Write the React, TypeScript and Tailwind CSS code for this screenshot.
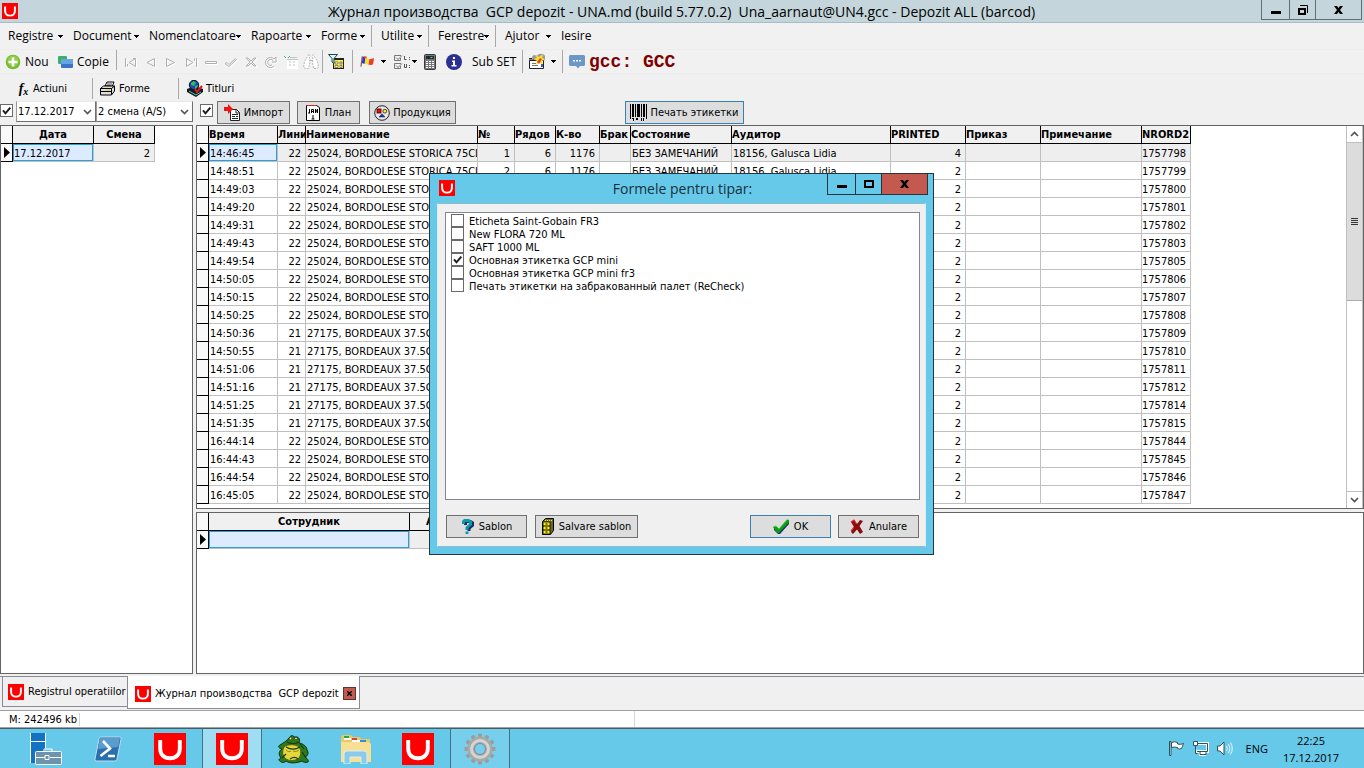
import React, { useState } from 'react';

type Kids = { children?: React.ReactNode };

const ULogo = ({ size }: { size: number }) => (
  <svg width={size} height={size} viewBox="0 0 32 32" className="shrink-0" aria-hidden="true">
    <rect width="32" height="32" fill="#fe0000" />
    <path d="M6.200 7v8.500c0 6.500 3.800 9.700 9.800 9.700s9.800-3.200 9.800-9.700V7" fill="none" stroke="#fff" strokeWidth="3.900" />
  </svg>
);

const Arrow = () => (
  <svg width="5" height="3" viewBox="0 0 5 3" className="shrink-0" shapeRendering="crispEdges" aria-hidden="true">
    <path d="M0 0h5v1H4v1H3v1H2V2H1V1H0z" fill="#000" />
  </svg>
);

const Sep = ({ className = '' }: { className?: string }) => (
  <span className={`w-px self-stretch bg-[#a7a7a7] ${className}`} />
);

const Chevron = ({ up = false }: { up?: boolean }) => (
  <svg width="9" height="6" viewBox="0 0 9 6" aria-hidden="true">
    <path d={up ? 'M1 5l3.5-3.5L8 5' : 'M1 1l3.5 3.5L8 1'} fill="none" stroke="#555" strokeWidth="1.7" />
  </svg>
);

function Check({ label, on, text = false }: { label: string; on: boolean; text?: boolean }) {
  const [v, setV] = useState(on);
  return (
    <label className="flex h-[13px] items-center gap-[5px] whitespace-nowrap">
      <span className="grid size-[13px] shrink-0">
        <input
          type="checkbox"
          aria-label={label}
          checked={v}
          onChange={() => setV(!v)}
          className="col-start-1 row-start-1 size-[13px] appearance-none border border-[#6a6a6a] bg-white"
        />
        {v && (
          <svg viewBox="0 0 13 13" className="pointer-events-none col-start-1 row-start-1 size-[13px]" aria-hidden="true">
            <path d="M3 6.3l2.500 3L10.300 3.600" fill="none" stroke="#1c1c1c" strokeWidth="2" />
          </svg>
        )}
      </span>
      {text && <span className="pt-px">{label}</span>}
    </label>
  );
}

/* ---------- menu ---------- */

const menus: { t: string; w: string; sep?: boolean; arrow?: boolean }[] = [
  { t: 'Registre', w: 'w-[55px]', arrow: true },
  { t: 'Document', w: 'w-[66px]', arrow: true },
  { t: 'Nomenclatoare', w: 'w-[92px]', arrow: true },
  { t: 'Rapoarte', w: 'w-[60px]', arrow: true },
  { t: 'Forme', w: 'w-[44px]', arrow: true, sep: true },
  { t: 'Utilite', w: 'w-[41px]', arrow: true, sep: true },
  { t: 'Ferestre', w: 'w-[51px]', arrow: true, sep: true },
  { t: 'Ajutor', w: 'w-[46px]', arrow: true },
  { t: 'Iesire', w: 'w-[30px]' },
];

const MenuBar = () => (
  <nav className="flex h-[27px] items-center border-b border-[#ececec] bg-[#f1f1f1] pl-2 font-['Open_Sans','Noto_Sans',sans-serif] text-xs">
    {menus.map((m) => (
      <React.Fragment key={m.t}>
        <button className={`flex items-center justify-between whitespace-nowrap ${m.w} ${m.sep ? 'mr-[6px]' : 'mr-[10px]'}`}>
          {m.t}
          {m.arrow && <Arrow />}
        </button>
        {m.sep && <Sep className="my-[2px] mr-[9px]" />}
      </React.Fragment>
    ))}
  </nav>
);

/* ---------- toolbar icons ---------- */

const navPaths: { n: string; d: string }[] = [
  { n: 'Prima', d: 'M2.500 4v9M4.500 12.500V10M12.500 4.500v8L6 8.500l6.500-4M12.500 4.500H10' },
  { n: 'Precedenta', d: 'M11.500 4.500v8L4 8.500l7.500-4z' },
  { n: 'Urmatoarea', d: 'M3.500 4.500v8l8-4-8-4z' },
  { n: 'Ultima', d: 'M3.500 4v8.500l6.500-4-6.500-4M13.500 4v9M11.500 4.500V7' },
  { n: 'Sterge', d: 'M2.500 7.500h11v2h-11z' },
  { n: 'Confirma', d: 'M2 9.500l2-1 2 2L12.500 4.500l1 1L6 12.500z' },
  { n: 'Renunta', d: 'M3 4h2l3 3 3-3h2L9 8l4 4h-2L8 9l-3 3H3l4-4z' },
  { n: 'Reincarca', d: 'M9 8h4V3l-2 2a5 5 0 1 0 0 7M10 6.500A3 3 0 1 0 9 11' },
];

const ToolButton = ({ label, children }: { label: string } & Kids) => (
  <button aria-label={label} className="flex h-5 w-5 shrink-0 items-center justify-center">
    {children}
  </button>
);

const NavIcon = ({ d }: { d: string }) => (
  <svg width="16" height="16" viewBox="0 0 16 16" fill="none" aria-hidden="true">
    <path d={d} stroke="#fff" transform="translate(1 1)" />
    <path d={d} stroke="#b0b0b0" />
  </svg>
);

const TableIcon = () => (
  <svg width="16" height="16" viewBox="0 0 16 16" aria-hidden="true">
    <path d="M1 2l2 2M5 4l2-2" stroke="#5aa" />
    <rect x="4" y="5" width="11" height="10" fill="#fff" />
    <path d="M7 3.500h7M4 5.500h11M6 8h2M10 8h2M6 11h2M10 11h2" stroke="#c4c4c4" />
  </svg>
);

const BinocularsIcon = () => (
  <svg width="18" height="17" viewBox="0 0 18 17" fill="#fff" stroke="#b8b8b8" aria-hidden="true">
    <path d="M6.500 1.500l1.500 1-1 4 1 3-1.500 6h-3l-2-1 1-6 3-5zM11.500 1.500l-1 1 .5 4-.5 3 1 6h3l2-1-1-6-3-5z" strokeDasharray="2 1" />
    <path d="M8 7.500h3" />
  </svg>
);

const FilterIcon = () => (
  <svg width="17" height="16" viewBox="0 0 17 16" aria-hidden="true">
    <rect x="5.500" y="4.500" width="10" height="10" fill="#ffe93b" stroke="#222" />
    <path d="M5 4h11v2H5z" fill="#222" />
    <path d="M7 8h3v2H7zM12 8h2v2h-2zM7 11.500h3v2H7zM12 11.500h2v2h-2z" fill="#fff" stroke="#444" strokeWidth=".6" />
    <path d="M.5.500h9l-3.500 4v5l-2-1.500V4.500z" fill="#dff1f1" stroke="#124b4b" />
  </svg>
);

const FlagsIcon = () => (
  <svg width="15" height="16" viewBox="0 0 16 16" aria-hidden="true">
    <path d="M2.500 2L1 13" stroke="#8a5a34" strokeWidth="1.3" />
    <path d="M3 2l3 1-1 7-3-1z" fill="#2136e8" />
    <path d="M6 3l4 2-1 6-4-1z" fill="#ffdf18" />
    <path d="M10 5c2 0 3-1 5-1l-1 6c-2 2-3 1-5 1z" fill="#ee3a2d" />
    <path d="M4 2h3v2H4z" fill="#ee3a2d" />
  </svg>
);

const ListIcon = () => (
  <svg width="17" height="16" viewBox="0 0 17 16" fill="none" aria-hidden="true">
    <path d="M7 1.500H.5v5h6V4M7 9.500H.5v5h6V12" stroke="#777" />
    <path d="M2 3.500l2 2 4-4M2 11.500l2 2 4-4" stroke="#777" />
    <path d="M10.500 2v3.500h2M15.500 3v1M15.500 5v1M10.500 10v3.500h2V10M15.500 11v1M15.500 13v1" stroke="#555" />
  </svg>
);

const CalcIcon = () => (
  <svg width="12" height="16" viewBox="0 0 12 16" aria-hidden="true">
    <rect x=".5" y=".5" width="11" height="15" rx="1" fill="#777" stroke="#3a3a3a" />
    <rect x="2" y="2" width="8" height="3" fill="#1d2c2c" />
    <path d="M6.500 3.500h2" stroke="#49e3dc" />
    <path d="M2 7.500h8M2 9.500h8M2 11.500h8M2 13.500h8" stroke="#fff" strokeDasharray="2 1" />
  </svg>
);

const InfoIcon = () => (
  <svg width="16" height="16" viewBox="0 0 16 16" aria-hidden="true">
    <circle cx="8" cy="8" r="8" fill="#2b3192" />
    <path d="M7 3h2v2H7zM6 6.500h3V11h1.500v1.500h-5V11H7V8H6z" fill="#fff" />
  </svg>
);

const WizardIcon = () => (
  <svg width="17" height="17" viewBox="0 0 17 17" className="shrink-0" aria-hidden="true">
    <path d="M3 5c0-3 3-4 5-2 1-3 7-3 8 0v4l-3 2H5z" fill="#9a9a9a" />
    <path d="M.5 7.500h14v8H.5z" fill="#fff" stroke="#222" />
    <path d="M0 5.500h3M0 7h5" stroke="#222" />
    <path d="M3 10.500h4M3 12.500h6" stroke="#777" />
    <path d="M6 2l4 2 4-3-1 4 3 1-3 2 1 3-4-1-3 2 1-4-3-2 3-1z" fill="#ffe525" />
    <path d="M8 9l3-4 2 1-3 5z" fill="#e8432e" />
    <path d="M12 11h2v3h-2z" fill="#3c58c8" />
  </svg>
);

const ChatIcon = () => (
  <svg width="16" height="16" viewBox="0 0 16 16" aria-hidden="true">
    <path d="M1 1h14l1 1v9l-1 1h-4l-2 2.500L7 12H1l-1-1V2z" fill="#6d97c8" />
    <path d="M4 6h2v1.500H4zM7 6h2v1.500H7zM10 6h2v1.500h-2z" fill="#fff" />
  </svg>
);

const Toolbar = () => (
  <div className="flex h-6 items-center border-b border-[#ececec] bg-[#f1f1f1] pl-[5px] font-['Open_Sans','Noto_Sans',sans-serif] text-xs">
    <button className="flex w-[53px] items-center gap-1">
      <svg width="16" height="16" viewBox="0 0 16 16" aria-hidden="true">
        <circle cx="8" cy="8" r="7.300" fill="#74bd2e" />
        <circle cx="8" cy="7" r="5.600" fill="#8fce45" />
        <path d="M6.700 3.500h2.600v3.200h3.200v2.600H9.300v3.200H6.700V9.300H3.500V6.700h3.200z" fill="#fff" />
      </svg>
      Nou
    </button>
    <button className="flex w-[58px] items-center gap-1">
      <svg width="15" height="14" viewBox="0 0 15 14" className="shrink-0" aria-hidden="true">
        <rect x="0" y="1" width="9" height="8" rx="1" fill="#3fae6b" />
        <rect x="3" y="4" width="12" height="9" rx="1" fill="#3c74c9" />
        <rect x="3" y="4" width="12" height="5" rx="1" fill="#67a4e6" />
      </svg>
      Copie
    </button>
    <Sep className="mr-1 h-5" />
    <div className="flex">
      {navPaths.map((p) => (
        <ToolButton key={p.n} label={p.n}>
          <NavIcon d={p.d} />
        </ToolButton>
      ))}
      <ToolButton label="Tabel">
        <TableIcon />
      </ToolButton>
      <ToolButton label="Cauta">
        <BinocularsIcon />
      </ToolButton>
    </div>
    <Sep className="ml-px mr-[3px]" />
    <div className="flex w-[26px]">
      <ToolButton label="Filtru">
        <FilterIcon />
      </ToolButton>
    </div>
    <Sep className="mr-[5px]" />
    <button aria-label="Limba" className="flex w-9 items-center gap-[6px] pl-[2px]">
      <FlagsIcon />
      <Arrow />
    </button>
    <button aria-label="Liste" className="flex w-[26px] items-center gap-px">
      <ListIcon />
      <Arrow />
    </button>
    <ToolButton label="Calculator">
      <CalcIcon />
    </ToolButton>
    <div className="ml-1 flex">
      <ToolButton label="Informatii">
        <InfoIcon />
      </ToolButton>
    </div>
    <button className="ml-2 w-[50px] whitespace-nowrap text-left">Sub SET</button>
    <Sep className="mr-[6px]" />
    <button aria-label="Expert" className="flex w-[33px] items-center gap-[5px]">
      <WizardIcon />
      <Arrow />
    </button>
    <Sep className="mr-[6px]" />
    <ChatIcon />
    <span className="ml-1 whitespace-pre font-['Liberation_Mono',monospace] text-lg font-bold text-[#800000]">gcc: GCC</span>
  </div>
);

const SubBar = () => (
  <div className="flex h-[26px] items-center bg-[#f0f0f0] pb-px pt-[4px]">
    <button className="flex w-[92px] items-center gap-[3px] pl-[17px]">
      <span className="w-[13px] font-['Liberation_Serif',serif] text-sm font-bold italic leading-4">
        f<sub className="text-[10px]">x</sub>
      </span>
      Actiuni
    </button>
    <Sep />
    <button className="flex w-[85px] items-center gap-[3px] pl-[7px]">
      <svg width="16" height="15" viewBox="0 0 16 15" aria-hidden="true">
        <path d="M5 5l2-4h7l-2 5z" fill="#fff" stroke="#000" />
        <path d="M7 3h5M6.500 4.500h5" stroke="#000" strokeWidth=".7" />
        <path d="M.5 7.500l3-2.500h11v5l-3 4h-11z" fill="#ddd" stroke="#000" />
        <path d="M.5 7.500h11l3-2.500M11.500 7.500v6M1 10.500h10" fill="none" stroke="#000" />
        <path d="M6 9h4" stroke="#e6d21a" strokeWidth="1.200" />
      </svg>
      Forme
    </button>
    <Sep />
    <button className="flex items-center gap-[3px] pl-2">
      <svg width="16" height="17" viewBox="0 0 16 17" aria-hidden="true">
        <path d="M0 9l8-3 8 3v3l-7 5-9-5z" fill="#1a1a1a" />
        <path d="M2 11l7 4 5-3" stroke="#3cc" fill="none" />
        <circle cx="7" cy="5" r="4.700" fill="#1746c9" stroke="#111" />
        <path d="M4 3l3-2 2 2-2 3-3-1zM8 6l3-1-1 3-2 1z" fill="#2fc04d" />
        <path d="M8 9l2 3 5-6" fill="none" stroke="#e01818" strokeWidth="2" />
      </svg>
      Titluri
    </button>
  </div>
);

const Drop = ({ id, label, value, w }: { id: string; label: string; value: string; w: string }) => (
  <div className={`grid h-[21px] ${w}`}>
    <select
      id={id}
      aria-label={label}
      className="col-start-1 row-start-1 h-[21px] w-full appearance-none border border-[#707070] border-t-[#e8e8e8] border-l-[#999] bg-white pl-px text-[11px]"
    >
      <option>{value}</option>
    </select>
    <span className="pointer-events-none col-start-1 row-start-1 mr-1 self-center justify-self-end">
      <Chevron />
    </span>
  </div>
);

const Btn = ({ children, className = '', blue = false }: Kids & { className?: string; blue?: boolean }) => (
  <button
    className={`flex h-[23px] items-center justify-center whitespace-nowrap border bg-[#dddddd] ${blue ? 'border-[#3c7fb1]' : 'border-[#707070]'} ${className}`}
  >
    {children}
  </button>
);

const ControlBar = () => (
  <div className="flex h-[25px] items-start pt-px">
    <div className="mt-[3px] w-4">
      <Check label="Data activa" on />
    </div>
    <Drop id="date" label="Data" value="17.12.2017" w="w-[80px]" />
    <Drop id="shift" label="Schimb" value="2 смена (A/S)" w="w-[97px]" />
    <div className="ml-[7px] mt-[3px] w-[17px]">
      <Check label="Schimb activ" on />
    </div>
    <Btn className="w-[73px] gap-[3px]">
      <svg width="17" height="17" viewBox="0 0 17 17" aria-hidden="true">
        <path d="M6.500 5.500h6l3 3v8h-9z" fill="#fff" stroke="#222" />
        <path d="M12 5v4h4M8 10.500h6M8 12.500h3M12 12.500h2M8 14.500h6" stroke="#222" fill="none" />
        <path d="M0 3h4V0l5 5-5 5V7H0z" fill="#f01414" />
      </svg>
      Импорт
    </Btn>
    <Btn className="ml-[7px] w-[63px] gap-[4px]">
      <svg width="15" height="17" viewBox="0 0 15 17" aria-hidden="true">
        <path d="M.5 1.500h10l3 2v13H.5z" fill="#fff" stroke="#000" />
        <path d="M1 1.500h9" stroke="#d22" />
        <path d="M3.500 5v4M2 9h2M5.500 9V5.500h2V9M5.500 7.500h2M9.500 9V5l2 4V5M7 11v4M5.500 15h3" stroke="#000" fill="none" />
      </svg>
      План
    </Btn>
    <Btn className="ml-[9px] w-[87px] gap-[3px]">
      <svg width="16" height="16" viewBox="0 0 16 16" aria-hidden="true">
        <circle cx="8" cy="8" r="7.300" fill="#e8e8e8" stroke="#222" />
        <rect x="3" y="4" width="4" height="4" fill="#f00" stroke="#400" strokeWidth=".8" />
        <circle cx="10.800" cy="6.200" r="1.900" fill="#ffe620" stroke="#222" strokeWidth=".8" />
        <path d="M5 12l3-3.200L11 12z" fill="#1c37d8" stroke="#112" strokeWidth=".5" />
      </svg>
      Продукция
    </Btn>
    <Btn blue className="ml-[169px] w-[119px] gap-[3px]">
      <svg width="17" height="17" viewBox="0 0 17 17" shapeRendering="crispEdges" aria-hidden="true">
        <path d="M0 0h1v15H0zM2 0h2v13H2zM5 0h1v13H5zM7 0h3v13H7zM11 0h1v13h-1zM13 0h2v13h-2zM16 0h1v15h-1zM2 14h2v1H2zM3 15h1v2H3zM6 14h2v2H6zM11 14h1v3h-1zM13 14h1v3h-1z" fill="#000" />
      </svg>
      Печать этикетки
    </Btn>
  </div>
);

/* ---------- tables ---------- */

const Marker = ({ on = false, head = false }: { on?: boolean; head?: boolean }) => {
  const C = head ? 'th' : 'td';
  return (
    <C className="h-[18px] border-b border-r border-black bg-[#f9f9f9] p-0">
      {on && (
        <svg width="7" height="11" viewBox="0 0 7 11" className="mx-auto" role="img" aria-label="Rand curent">
          <path d="M1 0l6 5.500L1 11z" fill="#000" />
        </svg>
      )}
    </C>
  );
};

const Th = ({ children, center = false }: Kids & { center?: boolean }) => (
  <th
    className={`h-[18px] overflow-hidden whitespace-nowrap border-b border-r border-black bg-[#f0f0f0] p-0 font-bold leading-[17px] ${center ? 'text-center' : 'text-left'}`}
  >
    {children}
  </th>
);

const Td = ({ children, right = false, cur = false, sel = false }: Kids & { right?: boolean; cur?: boolean; sel?: boolean }) => (
  <td
    className={`h-[18px] overflow-hidden whitespace-nowrap border-b border-r border-[#c0c0c0] pb-0 pt-[2px] leading-[15px] ${right ? 'pl-0 pr-[4px] text-right' : 'pl-px pr-0'} ${
      sel ? 'bg-[#dcebff] shadow-[inset_0_0_0_1px_#26a0da]' : cur ? 'bg-[#eeeeee]' : 'bg-white'
    }`}
  >
    {children}
  </td>
);

const times = [
  '14:46:45', '14:48:51', '14:49:03', '14:49:20', '14:49:31', '14:49:43', '14:49:54', '14:50:05', '14:50:15', '14:50:25',
  '14:50:36', '14:50:55', '14:51:06', '14:51:16', '14:51:25', '14:51:35', '16:44:14', '16:44:43', '16:44:54', '16:45:05',
];
const orders = [
  1757798, 1757799, 1757800, 1757801, 1757802, 1757803, 1757805, 1757806, 1757807, 1757808,
  1757809, 1757810, 1757811, 1757812, 1757814, 1757815, 1757844, 1757845, 1757846, 1757847,
];

const MainTable = () => (
  <table className="w-[994px] table-fixed border-separate border-spacing-0">
    <colgroup>
      <col className="w-3" />
      <col className="w-[69px]" />
      <col className="w-7" />
      <col className="w-[172px]" />
      <col className="w-[37px]" />
      <col className="w-[41px]" />
      <col className="w-11" />
      <col className="w-[31px]" />
      <col className="w-[101px]" />
      <col className="w-[159px]" />
      <col className="w-[75px]" />
      <col className="w-[75px]" />
      <col className="w-[101px]" />
      <col className="w-[49px]" />
    </colgroup>
    <thead>
      <tr>
        <Marker head />
        {['Время', 'Линия', 'Наименование', '№', 'Рядов', 'К-во', 'Брак', 'Состояние', 'Аудитор', 'PRINTED', 'Приказ', 'Примечание', 'NRORD2'].map((h) => (
          <Th key={h}>{h}</Th>
        ))}
      </tr>
    </thead>
    <tbody>
      {times.map((t, i) => {
        const alt = i >= 10 && i < 16;
        const cur = i === 0;
        return (
          <tr key={t}>
            <Marker on={cur} />
            <Td sel={cur}>{t}</Td>
            <Td cur={cur} right>{alt ? 21 : 22}</Td>
            <Td cur={cur}>{alt ? '27175, BORDEAUX 37.5CL' : '25024, BORDOLESE STORICA 75CL'}</Td>
            <Td cur={cur} right>{i + 1}</Td>
            <Td cur={cur} right>6</Td>
            <Td cur={cur} right>1176</Td>
            <Td cur={cur} />
            <Td cur={cur}>БЕЗ ЗАМЕЧАНИЙ</Td>
            <Td cur={cur}>18156, Galusca Lidia</Td>
            <Td cur={cur} right>{cur ? 4 : 2}</Td>
            <Td cur={cur} />
            <Td cur={cur} />
            <Td cur={cur} right>{orders[i]}</Td>
          </tr>
        );
      })}
    </tbody>
  </table>
);

const Scrollbar = () => (
  <div className="flex w-[17px] flex-col border-x border-[#c0c0c0] bg-white" role="scrollbar" aria-controls="main-grid" aria-valuenow={0}>
    <button aria-label="Sus" className="flex h-[17px] items-center justify-center border-b border-[#c0c0c0]">
      <Chevron up />
    </button>
    <div className="flex h-[158px] flex-col items-center justify-center gap-px border-b border-[#ababab] bg-[#dcdcdc]">
      <span className="h-px w-[7px] bg-[#333]" />
      <span className="h-px w-[7px] bg-[#333]" />
      <span className="h-px w-[7px] bg-[#333]" />
      <span className="h-px w-[7px] bg-[#333]" />
    </div>
    <div className="flex-1" />
    <button aria-label="Jos" className="flex h-[17px] items-center justify-center border-t border-[#c0c0c0]">
      <Chevron />
    </button>
  </div>
);

const Workspace = () => (
  <div className="flex flex-1 gap-[3px]">
    <section className="w-[193px] shrink-0 border border-[#646464] bg-white">
      <table className="w-[154px] table-fixed border-separate border-spacing-0">
        <colgroup>
          <col className="w-3" />
          <col className="w-[81px]" />
          <col className="w-[61px]" />
        </colgroup>
        <thead>
          <tr>
            <Marker head />
            <Th center>Дата</Th>
            <Th center>Смена</Th>
          </tr>
        </thead>
        <tbody>
          <tr>
            <Marker on />
            <Td sel>17.12.2017</Td>
            <Td cur right>2</Td>
          </tr>
        </tbody>
      </table>
    </section>
    <div className="flex min-w-0 flex-1 flex-col gap-[3px]">
      <section id="main-grid" className="flex border border-[#646464] bg-white">
        <div className="min-w-0 flex-1 overflow-hidden pb-1">
          <MainTable />
        </div>
        <Scrollbar />
      </section>
      <section className="flex-1 border border-[#646464] bg-white">
        <table className="w-[293px] table-fixed border-separate border-spacing-0">
          <colgroup>
            <col className="w-3" />
            <col className="w-[201px]" />
            <col className="w-20" />
          </colgroup>
          <thead>
            <tr>
              <Marker head />
              <Th center>Сотрудник</Th>
              <Th center>Активен</Th>
            </tr>
          </thead>
          <tbody>
            <tr>
              <Marker on />
              <Td sel />
              <Td cur />
            </tr>
          </tbody>
        </table>
      </section>
    </div>
  </div>
);

/* ---------- dialog ---------- */

const forms = [
  'Eticheta Saint-Gobain FR3',
  'New FLORA 720 ML',
  'SAFT 1000 ML',
  'Основная этикетка GCP mini',
  'Основная этикетка GCP mini fr3',
  'Печать этикетки на забракованный палет (ReCheck)',
];

const CloseX = () => (
  <svg width="9" height="8" viewBox="0 0 9 8" aria-hidden="true">
    <path d="M0 0h3l1.500 2L6 0h3L6 4l3 4H6L4.500 6 3 8H0l3-4z" fill="#000" />
  </svg>
);

const Dialog = () => (
  <div
    role="dialog"
    aria-labelledby="dlg-title"
    className="absolute left-[429px] top-[173px] w-[505px] border border-[#27343b] bg-[#66c9ea] px-[7px] pb-[7px]"
  >
    <header className="flex h-[29px] items-start">
      <span className="ml-[2px] mt-[6px]">
        <ULogo size={16} />
      </span>
      <h2 id="dlg-title" className="flex-1 pl-[83px] pt-[5px] text-center font-['Open_Sans','Noto_Sans',sans-serif] text-sm leading-5 text-[#16303a]">
        Formele pentru tipar:
      </h2>
      <div className="-mr-[2px] flex h-[21px] border border-t-0 border-[#27343b]">
        <button aria-label="Minimizeaza" className="flex w-7 items-center justify-center border-r border-[#27343b]">
          <svg width="10" height="8" viewBox="0 0 10 8" aria-hidden="true"><path d="M0 5h10v3H0z" /></svg>
        </button>
        <button aria-label="Maximizeaza" className="flex w-[26px] items-center justify-center border-r border-[#27343b]">
          <svg width="10" height="8" viewBox="0 0 10 8" aria-hidden="true"><path d="M1 1h8v6H1z" fill="none" stroke="#000" strokeWidth="2" /></svg>
        </button>
        <button aria-label="Inchide" className="flex w-[45px] items-center justify-center bg-[#c3594f]">
          <CloseX />
        </button>
      </div>
    </header>
    <div className="border border-[#8fbccb] border-x-[#d9edf3] bg-[#f0f0f0] pb-[8px] pl-[7px] pr-[5px] pt-[8px]">
      <div className="h-[288px] border border-[#828790] bg-white pl-[5px] pt-px">
        {forms.map((f) => (
          <Check key={f} label={f} on={f === 'Основная этикетка GCP mini'} text />
        ))}
      </div>
      <div className="mt-[15px] flex pl-px pr-px">
        <Btn className="w-[81px] gap-[5px]">
          <svg width="13" height="17" viewBox="0 0 13 17" aria-hidden="true">
            <path d="M2 6V3l2-2h5l3 2v4L8.500 10v2h-3V9L9 6V4H5v2z" fill="#1a2a6b" transform="translate(1 1)" />
            <path d="M1 6V3l2-2h5l3 2v4L7.500 10v2h-3V9L8 6V4H4v2zM4.500 13.500h3V16h-3z" fill="#0c9aa6" />
          </svg>
          Sablon
        </Btn>
        <Btn className="ml-2 w-[103px] gap-[5px]">
          <svg width="12" height="17" viewBox="0 0 12 17" aria-hidden="true">
            <path d="M.5 3.500l3-3h8v12l-3 4h-8z" fill="#6b6a2a" stroke="#000" />
            <path d="M1 4h7v12H1z" fill="#ffee1c" stroke="#000" strokeWidth=".8" />
            <path d="M1 8h7M1 12h7M3.500 6h2M3.500 10h2M3.500 14h2" stroke="#000" />
            <path d="M3 2.500h7" stroke="#ffee1c" strokeDasharray="1 1" />
          </svg>
          Salvare sablon
        </Btn>
        <Btn blue className="ml-auto w-[81px] gap-[5px]">
          <svg width="16" height="15" viewBox="0 0 16 15" aria-hidden="true">
            <path d="M1 9l3-1 2 2 8-9 2 1v3L7 15H5L1 11z" fill="#1a2a78" />
            <path d="M0 8l3-1 3 3 8-9.500 2 .5v2.500L6 14H4z" fill="#109a16" />
            <path d="M0 8l3-1 3 3 8-9" fill="none" stroke="#2fe03a" strokeWidth=".8" />
          </svg>
          OK
        </Btn>
        <Btn className="ml-[7px] w-[81px] gap-[5px]">
          <svg width="14" height="15" viewBox="0 0 14 15" aria-hidden="true">
            <path d="M1 3l3-2 3 4 3-4 3 1-3.500 5L13 13l-3 2-3-4.500L3 15l-2-2 3-5z" fill="#8c0d0d" />
            <path d="M1 3l3-2 2.500 4M4 8l-3 4" fill="none" stroke="#e02525" strokeWidth="1.200" />
          </svg>
          Anulare
        </Btn>
      </div>
    </div>
  </div>
);

/* ---------- bottom ---------- */

const TabStrip = () => (
  <div className="mt-[2px] flex h-[34px] items-start pl-[2px] shadow-[inset_0_1px_0_#8b8b95]">
    <button className="mt-px flex h-[30px] w-[125px] items-center gap-1 whitespace-nowrap border-b border-l border-[#8b8b95] pl-[5px]">
      <ULogo size={16} />
      Registrul operatiilor
    </button>
    <div className="flex h-[33px] w-[233px] items-center gap-1 whitespace-pre border border-t-0 border-[#8b8b95] bg-white pl-[7px] pt-[3px]">
      <ULogo size={16} />
      <span>{'Журнал производства  GCP depozit'}</span>
      <button aria-label="Inchide" className="ml-auto mr-[3px] flex size-[13px] shrink-0 items-center justify-center border border-[#5e3430] bg-[#c3594f]">
        <svg width="5" height="5" viewBox="0 0 5 5" aria-hidden="true"><path d="M0 0l5 5M5 0L0 5" stroke="#000" strokeWidth="1.400" /></svg>
      </button>
    </div>
  </div>
);

const StatusBar = () => (
  <footer className="flex h-[18px] items-center border-b border-t border-[#a0a0a0] bg-white">
    <span className="w-20 whitespace-nowrap border-r border-[#d7d7d7] pl-[9px]">M: 242496 kb</span>
    <span className="h-full w-[555px] border-r border-[#d7d7d7]" />
  </footer>
);

const Slot = ({ label, children, mode = '' }: Kids & { label: string; mode?: '' | 'on' | 'open' }) => (
  <button
    aria-label={label}
    className={`mx-px flex h-full w-[60px] items-center justify-center border-x ${
      mode === 'on' ? 'border-[#3d7488] bg-[#a0dcf2]' : mode === 'open' ? 'border-[#3d7488] bg-[#76cfec]' : 'border-transparent'
    }`}
  >
    {children}
  </button>
);

const gearTeeth = [0, 30, 60, 90, 120, 150, 180, 210, 240, 270, 300, 330];

const Taskbar = () => (
  <div className="flex h-10 items-stretch border-t border-[#4b5a60] bg-[#66c9ea] pl-[15px] font-['Open_Sans','Noto_Sans',sans-serif]">
    <Slot label="Server Manager">
      <svg width="32" height="32" viewBox="0 0 32 32" aria-hidden="true">
        <path d="M0 0h15v8H0zM0 9h15v21H0z" fill="#1273c2" />
        <path d="M0 8.500h15M.5 0v30M15.500 0v15" stroke="#fff" />
        <rect x="5.500" y="18.500" width="26" height="13" rx="1" fill="#6d94ac" stroke="#fff" />
        <path d="M14 18v-2h8v2M6 24.500h9M20 24.500h11M15 22.500h4v4h-4z" fill="none" stroke="#fff" />
      </svg>
    </Slot>
    <Slot label="PowerShell">
      <svg width="28" height="26" viewBox="0 0 28 26" aria-hidden="true">
        <path d="M6 1h20a1.500 1.500 0 0 1 1 2l-4 20a2 2 0 0 1-2 2H2a1.500 1.500 0 0 1-1-2L5 3a2 2 0 0 1 1-2z" fill="#2b6fae" stroke="#bcdcf0" />
        <path d="M6 2h20l-2 9L4 13z" fill="#5b9ccf" />
        <path d="M9 5l7 7.500L6.500 20M14 20h7" fill="none" stroke="#fff" strokeWidth="2.600" />
      </svg>
    </Slot>
    <Slot label="UNA">
      <ULogo size={32} />
    </Slot>
    <Slot label="UNA activ" mode="on">
      <ULogo size={32} />
    </Slot>
    <Slot label="Toad">
      <svg width="32" height="30" viewBox="0 0 32 30" aria-hidden="true">
        <path d="M2 27c-2-1-1-2 1-3-3-4-2-7 1-9-4-1-4-3-2-4 3-2 7-4 9-7 2-3 4-3 5-1l3 0c3 1 3 4 2 6 5 1 8 4 8 7 2 3 1 6-2 7 3 2 4 4 3 5-2 1-5 0-6-1-5 2-12 3-16 0-2 2-4 2-6 0z" fill="#2c7a1e" stroke="#0c2f08" />
        <path d="M6 13c3-3 12-3 15 0 3 4 2 9-1 12-4 2-9 2-12 0-4-3-4-8-2-12z" fill="#e4d63c" stroke="#5c5a10" />
        <path d="M9 8c4 2 8 2 12 0M8 13c5 3 9 3 14 0M4 24l4-4M28 24l-4-6M12 25c3-2 6-2 8 0M22 10l4 5" fill="none" stroke="#123f0c" strokeWidth="1.200" />
        <path d="M8 16c2 2 4 2 5 1M15 17c3 1 5 0 6-1" fill="none" stroke="#8d8a1c" />
        <circle cx="12.500" cy="4.500" r="1.300" fill="#f0ef9a" stroke="#111" strokeWidth=".6" />
        <circle cx="18" cy="4.500" r="1.300" fill="#f0ef9a" stroke="#111" strokeWidth=".6" />
      </svg>
    </Slot>
    <Slot label="Explorer">
      <svg width="32" height="30" viewBox="0 0 32 30" aria-hidden="true">
        <path d="M2 1h9l2 2h7l1 2h9v22H1V4z" fill="#e8c965" />
        <path d="M4 2h5v2H4z" fill="#2da544" />
        <path d="M12 4h5v2h-5z" fill="#d2453c" />
        <path d="M20 6h6v2h-6z" fill="#3a8bd0" />
        <path d="M4 4h7v2H4zM12 6h8v2h-8zM20 8h9v2h-9z" fill="#fff" />
        <path d="M1 8h28l2 2v18H1z" fill="#f7df93" />
        <path d="M4 30V20q0-3 3-3h17q3 0 3 3v10h-6v-7H10v7z" fill="#8bcbe9" stroke="#d7effa" />
      </svg>
    </Slot>
    <Slot label="UNA 2">
      <ULogo size={32} />
    </Slot>
    <Slot label="Servicii" mode="open">
      <svg width="32" height="32" viewBox="0 0 32 32" aria-hidden="true">
        {gearTeeth.map((a) => (
          <path key={a} d="M13.600 6l.7-5.500h3.400l.7 5.500z" fill="#9b9b9b" transform={`rotate(${a} 16 16)`} />
        ))}
        <circle cx="16" cy="16" r="9" fill="none" stroke="#a9a9a9" strokeWidth="7" />
        <circle cx="16" cy="16" r="8.500" fill="none" stroke="#d4d4d4" strokeWidth="3" />
        <circle cx="16" cy="16" r="5.500" fill="#76cfec" stroke="#8a8a8a" />
      </svg>
    </Slot>
    <div className="ml-auto flex items-center gap-[7px]">
      <svg width="17" height="17" viewBox="0 0 17 17" fill="#fff" stroke="#2c5360" aria-hidden="true">
        <path d="M3.500 2.500q3-1.500 6 0v1.500q3 1 6-.5-1 3-2 5-2 1-4 0v-1q-3-1-6 0z" />
        <path d="M1.500 1.500h1.500v14H1.500z" />
      </svg>
      <svg width="17" height="17" viewBox="0 0 17 17" fill="none" stroke="#2c5360" aria-hidden="true">
        <path d="M5 3.500h10.500v8H5M10.500 11.500v3M7 14.500h7" stroke="#fff" strokeWidth="3" />
        <path d="M6 3.500h9.500v8H5M8 12v2.500h6V12" />
        <path d="M1.500 1.500h4v4h-4zM3.500 6v7.500h2" fill="#fff" />
      </svg>
      <svg width="17" height="17" viewBox="0 0 17 17" fill="none" stroke="#2c5360" aria-hidden="true">
        <path d="M1.500 6v5h2.500l4 4V2l-4 4z" fill="#fff" />
        <path d="M10.500 6q1.500 2.500 0 5M12.500 4q3 4.500 0 9M14.500 2.500q3.500 6 0 12" stroke="#eaf7fc" />
      </svg>
      <span className="ml-[6px]">ENG</span>
      <time className="ml-[3px] mr-5 w-[66px] text-center leading-[17px]">
        22:25
        <br />
        17.12.2017
      </time>
    </div>
  </div>
);

const TitleBar = () => (
  <header className="flex h-[23px] items-start border-b border-[#a9bcc6] bg-[#c4d6dc] pl-[2px]">
    <span className="mt-[3px]">
      <ULogo size={16} />
    </span>
    <h1 className="flex-1 whitespace-pre pl-[84px] text-center font-['Open_Sans','Noto_Sans',sans-serif] text-sm leading-[23px]">
      {'Журнал производства  GCP depozit - UNA.md (build 5.77.0.2)  Una_aarnaut@UN4.gcc - Depozit ALL (barcod)'}
    </h1>
    <div className="mr-[2px] flex h-5 border border-t-0 border-[#5f6f76]">
      <button aria-label="Minimizeaza" className="flex w-7 items-center justify-center border-r border-[#5f6f76]">
        <svg width="10" height="8" viewBox="0 0 10 8" aria-hidden="true"><path d="M0 5h10v3H0z" /></svg>
      </button>
      <button aria-label="Restaureaza" className="flex w-[26px] items-center justify-center border-r border-[#5f6f76]">
        <svg width="10" height="10" viewBox="0 0 10 10" fill="none" stroke="#000" aria-hidden="true">
          <path d="M1 4h6v5H1z" strokeWidth="2" />
          <path d="M2 .5h7.500V8" />
        </svg>
      </button>
      <button aria-label="Inchide" className="flex w-[45px] items-center justify-center">
        <CloseX />
      </button>
    </div>
  </header>
);

export default function App() {
  return (
    <div className="relative flex min-h-screen flex-col overflow-hidden bg-[#f0f0f0] font-['DejaVu_Sans_Condensed','DejaVu_Sans',sans-serif] text-[11px] leading-[13px] text-black">
      <TitleBar />
      <MenuBar />
      <Toolbar />
      <SubBar />
      <ControlBar />
      <Workspace />
      <TabStrip />
      <StatusBar />
      <Taskbar />
      <Dialog />
    </div>
  );
}
